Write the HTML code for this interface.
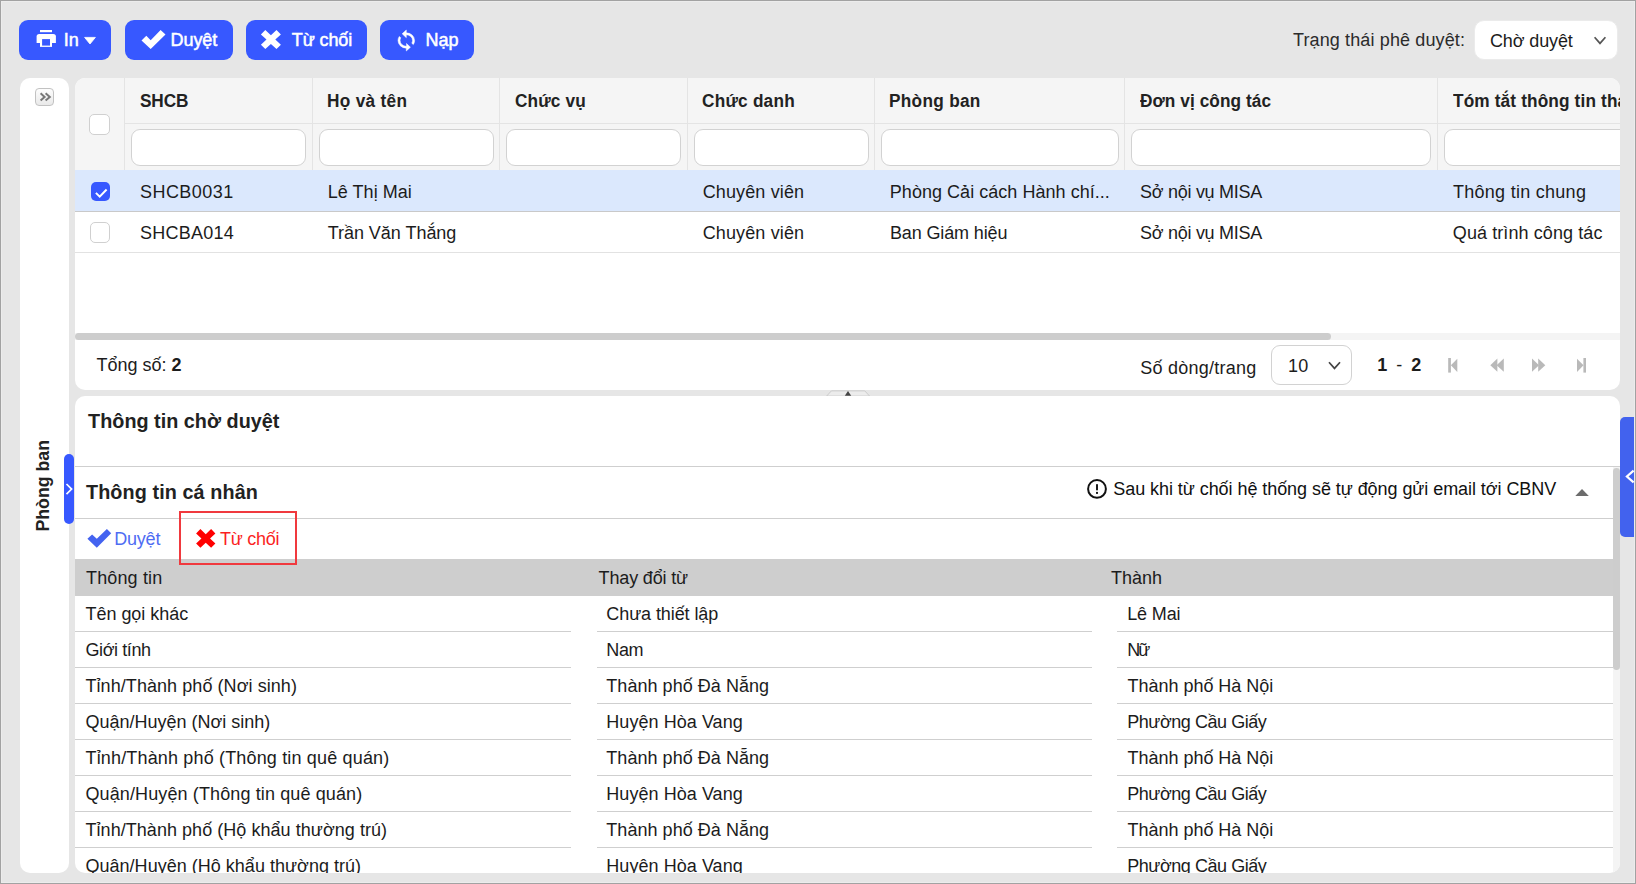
<!DOCTYPE html>
<html><head><meta charset="utf-8">
<style>
*{box-sizing:border-box;margin:0;padding:0}
html,body{width:1636px;height:884px;overflow:hidden}
body{background:#e6e6e6;font-family:"Liberation Sans",sans-serif;color:#1c1c1c;position:relative;font-size:18px}
.a{position:absolute}
svg{position:absolute;overflow:visible}
.t{position:absolute;white-space:nowrap;line-height:1}
.btn{position:absolute;top:20px;height:40px;background:#3758ff;border-radius:9px}
.w{color:#fff;-webkit-text-stroke:0.45px #fff}
.panel{position:absolute;background:#fff;border-radius:10px;overflow:hidden}
.inp{position:absolute;top:129px;height:37px;background:#fff;border:1px solid #d2d2d2;border-radius:9px}
.cb{position:absolute;width:21px;height:21px;border:1px solid #d0d0d0;border-radius:5px;background:#fff}
</style></head><body>
<div class="btn" style="left:19px;width:92px"></div>
<div class="btn" style="left:125px;width:108px"></div>
<div class="btn" style="left:246px;width:121px"></div>
<div class="btn" style="left:380px;width:94px"></div>
<svg class="a" style="left:36px;top:29px" width="21" height="19" viewBox="36 29 21 19"><rect x="40" y="30" width="12" height="2.2" fill="#fff"/><path d="M39.2 34 h14.1 a2.6 2.6 0 0 1 2.6 2.6 v6.4 h-19.3 v-6.4 a2.6 2.6 0 0 1 2.6 -2.6z" fill="#fff"/><rect x="40" y="38.9" width="12" height="8" fill="#fff"/><rect x="42.1" y="39.1" width="7.9" height="6.5" fill="#3758ff"/></svg>
<div class="t" style="left:63.8px;top:30.76px;font-size:18px;color:#fff;-webkit-text-stroke:0.5px #fff;">In</div>
<svg class="a" style="left:84px;top:37px" width="12" height="8" viewBox="84 37 12 8"><path d="M84.6 37.4 h10.8 l-5.4 6.6z" fill="#fff" stroke="#fff" stroke-width="0.8" stroke-linejoin="round"/></svg>
<svg class="a" style="left:141px;top:29px" width="25" height="21" viewBox="141 29 25 21"><polygon points="141.5,40.4 146.3,35.75 150.7,40.15 160.6,30 165.5,34.4 150.7,49.05" fill="#fff"/></svg>
<div class="t" style="left:170.6px;top:30.76px;font-size:18px;color:#fff;letter-spacing:-0.1px;-webkit-text-stroke:0.5px #fff;">Duyệt</div>
<svg class="a" style="left:260px;top:29px" width="22" height="21" viewBox="260 29 22 21"><polygon points="260.90,34.40 265.30,30.00 270.90,35.15 276.50,30.00 280.90,34.40 275.30,39.55 280.90,44.70 276.50,49.10 270.90,43.95 265.30,49.10 260.90,44.70 266.50,39.55" fill="#fff"/></svg>
<div class="t" style="left:291.8px;top:30.76px;font-size:18px;color:#fff;letter-spacing:-0.1px;-webkit-text-stroke:0.5px #fff;">Từ chối</div>
<svg class="a" style="left:398.3px;top:30px" width="16.6" height="21" viewBox="4 1 16 22" preserveAspectRatio="none"><path fill="#fff" stroke="#fff" stroke-width="0.5" d="M12,18A6,6 0 0,1 6,12C6,11 6.25,10.03 6.7,9.2L5.24,7.74C4.46,8.97 4,10.43 4,12A8,8 0 0,0 12,20V23L16,19L12,15M12,4V1L8,5L12,9V6A6,6 0 0,1 18,12C18,13 17.75,13.97 17.3,14.8L18.76,16.26C19.54,15.03 20,13.57 20,12A8,8 0 0,0 12,4Z"/></svg>
<div class="t" style="left:425.6px;top:30.76px;font-size:18px;color:#fff;-webkit-text-stroke:0.5px #fff;">Nạp</div>
<div class="t" style="left:1293px;top:31.06px;font-size:18px;color:#2b2b2b;letter-spacing:0.125px;">Trạng thái phê duyệt:</div>
<div class="a" style="left:1474px;top:20px;width:144px;height:40px;background:#fff;border-radius:10px;border:1px solid #ebebeb;"></div>
<div class="t" style="left:1490px;top:32.06px;font-size:18px;letter-spacing:-0.125px;">Chờ duyệt</div>
<svg class="a" style="left:1593px;top:35px" width="14" height="11" viewBox="1593 35 14 11"><path d="M1594.6 37.2 L1600 43.4 L1605.4 37.2" fill="none" stroke="#555" stroke-width="1.7"/></svg>
<div class="panel" style="left:20px;top:78px;width:49px;height:795px"></div>
<div class="a" style="left:35px;top:88px;width:19px;height:18px;background:linear-gradient(#fdfdfd,#e9e9e9);border:1px solid #c2c2c2;border-radius:4px;"></div>
<svg class="a" style="left:39px;top:92px" width="12" height="10" viewBox="39 92 12 10"><path d="M40.6 93.3 L44.6 96.9 L40.6 100.5 M45.6 93.3 L49.8 96.9 L45.6 100.5" fill="none" stroke="#777" stroke-width="2"/></svg>
<div class="t" style="left:0;top:0;font-size:18px;font-weight:700;color:#222;transform-origin:0 0;transform:translate(34px,531.6px) rotate(-90deg) scaleX(0.985)">Phòng ban</div>
<div class="a" style="left:64px;top:454px;width:10px;height:70px;background:#3758ff;border-radius:5px;"></div>
<svg class="a" style="left:65px;top:482px" width="9" height="14" viewBox="65 482 9 14"><path d="M66.5 484 L71.6 489.1 L66.5 494.2" fill="none" stroke="#fff" stroke-width="1.7"/></svg>
<div class="panel" style="left:75px;top:78px;width:1545px;height:312px">
<div class="a" style="left:0;top:0;width:1545px;height:92px;background:#f5f5f5"></div>
</div>
<div class="a" style="left:75px;top:78px;width:1545px;height:312px;overflow:hidden;border-radius:10px">
<div class="a" style="left:-75px;top:-78px;width:1636px;height:884px">
<div class="a" style="left:124.0px;top:78px;width:1px;height:92px;background:#e4e4e4;"></div>
<div class="a" style="left:311.5px;top:78px;width:1px;height:92px;background:#e4e4e4;"></div>
<div class="a" style="left:499.0px;top:78px;width:1px;height:92px;background:#e4e4e4;"></div>
<div class="a" style="left:686.5px;top:78px;width:1px;height:92px;background:#e4e4e4;"></div>
<div class="a" style="left:874.0px;top:78px;width:1px;height:92px;background:#e4e4e4;"></div>
<div class="a" style="left:1124.0px;top:78px;width:1px;height:92px;background:#e4e4e4;"></div>
<div class="a" style="left:1437.0px;top:78px;width:1px;height:92px;background:#e4e4e4;"></div>
<div class="a" style="left:125px;top:123px;width:1500px;height:1px;background:#e4e4e4;"></div>
<div class="t" style="left:139.8px;top:91.76px;font-size:18px;font-weight:700;color:#222;letter-spacing:-0.133px;transform:scaleX(0.957);transform-origin:0 0;">SHCB</div>
<div class="t" style="left:327.3px;top:91.76px;font-size:18px;font-weight:700;color:#222;letter-spacing:0.312px;transform:scaleX(0.957);transform-origin:0 0;">Họ và tên</div>
<div class="t" style="left:514.6px;top:91.76px;font-size:18px;font-weight:700;color:#222;letter-spacing:0.133px;transform:scaleX(0.957);transform-origin:0 0;">Chức vụ</div>
<div class="t" style="left:702.3px;top:91.76px;font-size:18px;font-weight:700;color:#222;letter-spacing:0.225px;transform:scaleX(0.957);transform-origin:0 0;">Chức danh</div>
<div class="t" style="left:889.4px;top:91.76px;font-size:18px;font-weight:700;color:#222;letter-spacing:0.312px;transform:scaleX(0.957);transform-origin:0 0;">Phòng ban</div>
<div class="t" style="left:1139.9px;top:91.76px;font-size:18px;font-weight:700;color:#222;letter-spacing:0.079px;transform:scaleX(0.957);transform-origin:0 0;">Đơn vị công tác</div>
<div class="t" style="left:1453px;top:91.76px;font-size:18px;font-weight:700;color:#222;letter-spacing:0.15px;transform:scaleX(0.957);transform-origin:0 0;">Tóm tắt thông tin thay đổi</div>
<div class="inp" style="left:131px;width:175px"></div>
<div class="inp" style="left:319px;width:174.5px"></div>
<div class="inp" style="left:506px;width:175px"></div>
<div class="inp" style="left:694px;width:174.5px"></div>
<div class="inp" style="left:881px;width:237.5px"></div>
<div class="inp" style="left:1131px;width:300px"></div>
<div class="inp" style="left:1444px;width:256px"></div>
<div class="cb" style="left:89px;top:114px"></div>
<div class="a" style="left:75px;top:170px;width:1545px;height:41px;background:#dbe8fd;"></div>
<div class="a" style="left:75px;top:211px;width:1545px;height:1px;background:#c9c9c9;"></div>
<div class="a" style="left:75px;top:252px;width:1545px;height:1px;background:#e2e2e2;"></div>
<div class="a" style="left:91px;top:182px;width:18.5px;height:19px;background:#3758ff;border-radius:5px;"></div>
<svg class="a" style="left:94px;top:187px" width="14" height="12" viewBox="94 187 14 12"><path d="M95.9 192.9 L99.7 196.6 L106.6 189.5" fill="none" stroke="#fff" stroke-width="2"/></svg>
<div class="cb" style="left:90px;top:222px;width:20px;height:20.5px"></div>
<div class="t" style="left:140.0px;top:182.76px;font-size:18px;letter-spacing:0.457px;">SHCB0031</div>
<div class="t" style="left:327.8px;top:182.76px;font-size:18px;letter-spacing:0.033px;">Lê Thị Mai</div>
<div class="t" style="left:702.7px;top:182.76px;font-size:18px;letter-spacing:0.13px;">Chuyên viên</div>
<div class="t" style="left:889.8px;top:182.76px;font-size:18px;letter-spacing:0.036px;">Phòng Cải cách Hành chí...</div>
<div class="t" style="left:1140.0px;top:182.76px;font-size:18px;letter-spacing:-0.276px;">Sở nội vụ MISA</div>
<div class="t" style="left:1453.0px;top:182.76px;font-size:18px;letter-spacing:0.271px;">Thông tin chung</div>
<div class="t" style="left:140.0px;top:223.76px;font-size:18px;letter-spacing:0.229px;">SHCBA014</div>
<div class="t" style="left:327.7px;top:223.76px;font-size:18px;letter-spacing:-0.032px;">Trần Văn Thắng</div>
<div class="t" style="left:702.7px;top:223.76px;font-size:18px;letter-spacing:0.13px;">Chuyên viên</div>
<div class="t" style="left:889.9px;top:223.76px;font-size:18px;letter-spacing:-0.125px;">Ban Giám hiệu</div>
<div class="t" style="left:1140.0px;top:223.76px;font-size:18px;letter-spacing:-0.276px;">Sở nội vụ MISA</div>
<div class="t" style="left:1452.8px;top:223.76px;font-size:18px;letter-spacing:0.088px;">Quá trình công tác</div>
<div class="a" style="left:75px;top:333px;width:1545px;height:7px;background:#f4f4f4;"></div>
<div class="a" style="left:75px;top:333px;width:1256px;height:7px;background:#cdcdcd;border-radius:4px;"></div>
<div class="t" style="left:96.5px;top:355.76px;font-size:18px;">Tổng số: <b>2</b></div>
<div class="t" style="left:1140.2px;top:358.56px;font-size:18px;letter-spacing:0.258px;">Số dòng/trang</div>
<div class="a" style="left:1271px;top:345px;width:81px;height:40px;background:#fff;border:1px solid #d2d2d2;border-radius:9px;"></div>
<div class="t" style="left:1288px;top:356.76px;font-size:18px;letter-spacing:0.3px;">10</div>
<svg class="a" style="left:1327px;top:360px" width="15" height="11" viewBox="1327 360 15 11"><path d="M1329 362.2 L1334.5 368.4 L1340 362.2" fill="none" stroke="#444" stroke-width="1.7"/></svg>
<div class="t" style="left:1377.3px;top:355.76px;font-size:18px;letter-spacing:0.4px;word-spacing:3.1px;"><b>1</b> - <b>2</b></div>
<svg class="a" style="left:1447px;top:357px" width="140" height="17" viewBox="1447 357 140 17"><g fill="#b9b9b9"><rect x="1448.2" y="358" width="2.7" height="14.6"/><polygon points="1450.9,365.3 1457.3,358.8 1457.3,372"/><polygon points="1490.3,365.2 1497.4,358.6 1497.4,371.8"/><polygon points="1496.6,365.2 1503.8,358.6 1503.8,371.8"/><polygon points="1545.3,365.2 1538.2,358.6 1538.2,371.8"/><polygon points="1539,365.2 1532,358.6 1532,371.8"/><rect x="1583.4" y="358" width="2.6" height="14.6"/><polygon points="1583.5,365.3 1577,358.8 1577,372"/></g></svg>
</div></div>
<svg class="a" style="left:826px;top:389.5px" width="45" height="7" viewBox="826 389.5 45 7"><polygon points="826.6,395.6 831.4,390.4 864.8,390.4 869.6,395.6" fill="#ececec" stroke="#c8c8c8" stroke-width="0.9"/><polygon points="844.8,395.2 848,390.6 851.2,395.2" fill="#444"/></svg>
<div class="a" style="left:75px;top:396px;width:1545px;height:477px;overflow:hidden;border-radius:10px;background:#fff">
<div class="a" style="left:-75px;top:-396px;width:1636px;height:884px">
<div class="t" style="left:88.1px;top:412.04px;font-size:19.8px;font-weight:700;color:#222;letter-spacing:0.018px;">Thông tin chờ duyệt</div>
<div class="a" style="left:75px;top:466px;width:1545px;height:1px;background:#cfcfcf;"></div>
<div class="t" style="left:86px;top:482.64px;font-size:19.8px;font-weight:700;color:#222;letter-spacing:0.094px;">Thông tin cá nhân</div>
<div class="a" style="left:75px;top:518px;width:1538px;height:1px;background:#cfcfcf;"></div>
<svg class="a" style="left:1086px;top:478px" width="22" height="22" viewBox="1086 478 22 22"><circle cx="1097" cy="488.9" r="8.9" fill="none" stroke="#111" stroke-width="2"/><rect x="1096.05" y="484.2" width="1.9" height="6.1" fill="#111"/><rect x="1096.05" y="491.9" width="1.9" height="2" fill="#111"/></svg>
<div class="t" style="left:1113.3px;top:479.56px;font-size:18px;color:#111;letter-spacing:-0.061px;">Sau khi từ chối hệ thống sẽ tự động gửi email tới CBNV</div>
<svg class="a" style="left:1575px;top:488px" width="14" height="8" viewBox="1575 488 14 8"><polygon points="1575.3,495.9 1582,489 1588.8,495.9" fill="#6c6c6c"/></svg>
<svg class="a" style="left:87px;top:528px" width="25" height="21" viewBox="87 528 25 21"><polygon points="87.4,538.8 92.1,534.5 96.8,538.8 106.9,529.1 111.2,533.2 96.8,547.8" fill="#4463f0"/></svg>
<div class="t" style="left:114.2px;top:530.26px;font-size:18px;color:#4e6cf3;letter-spacing:-0.2px;">Duyệt</div>
<svg class="a" style="left:195px;top:528px" width="22" height="21" viewBox="195 528 22 21"><polygon points="196.10,533.40 200.40,529.10 205.75,534.15 211.10,529.10 215.40,533.40 210.05,538.45 215.40,543.50 211.10,547.80 205.75,542.75 200.40,547.80 196.10,543.50 201.45,538.45" fill="#ff0000"/></svg>
<div class="t" style="left:219.9px;top:530.26px;font-size:18px;color:#fb1f24;letter-spacing:-0.251px;">Từ chối</div>
<div class="a" style="left:75px;top:559px;width:1538px;height:36.6px;background:#cecece;"></div>
<div class="t" style="left:86.1px;top:569.36px;font-size:18px;letter-spacing:0.125px;">Thông tin</div>
<div class="t" style="left:598.6px;top:569.36px;font-size:18px;letter-spacing:-0.16px;">Thay đổi từ</div>
<div class="t" style="left:1111px;top:569.36px;font-size:18px;">Thành</div>
<div class="t" style="left:85.5px;top:604.56px;font-size:18px;letter-spacing:-0.031px;">Tên gọi khác</div>
<div class="t" style="left:606.3px;top:604.56px;font-size:18px;letter-spacing:-0.085px;">Chưa thiết lập</div>
<div class="t" style="left:1127.2px;top:604.56px;font-size:18px;letter-spacing:-0.14px;">Lê Mai</div>
<div class="a" style="left:75px;top:631px;width:496px;height:1px;background:#cfcfcf;"></div>
<div class="a" style="left:596.5px;top:631px;width:495.5px;height:1px;background:#cfcfcf;"></div>
<div class="a" style="left:1117px;top:631px;width:496px;height:1px;background:#cfcfcf;"></div>
<div class="t" style="left:85.5px;top:640.56px;font-size:18px;letter-spacing:-0.415px;">Giới tính</div>
<div class="t" style="left:606.3px;top:640.56px;font-size:18px;letter-spacing:-0.35px;">Nam</div>
<div class="t" style="left:1127.2px;top:640.56px;font-size:18px;letter-spacing:-1.9px;">Nữ</div>
<div class="a" style="left:75px;top:667px;width:496px;height:1px;background:#cfcfcf;"></div>
<div class="a" style="left:596.5px;top:667px;width:495.5px;height:1px;background:#cfcfcf;"></div>
<div class="a" style="left:1117px;top:667px;width:496px;height:1px;background:#cfcfcf;"></div>
<div class="t" style="left:85.5px;top:676.56px;font-size:18px;letter-spacing:0.063px;">Tỉnh/Thành phố (Nơi sinh)</div>
<div class="t" style="left:606.3px;top:676.56px;font-size:18px;letter-spacing:0.044px;">Thành phố Đà Nẵng</div>
<div class="t" style="left:1127.5px;top:676.56px;font-size:18px;letter-spacing:-0.021px;">Thành phố Hà Nội</div>
<div class="a" style="left:75px;top:703px;width:496px;height:1px;background:#cfcfcf;"></div>
<div class="a" style="left:596.5px;top:703px;width:495.5px;height:1px;background:#cfcfcf;"></div>
<div class="a" style="left:1117px;top:703px;width:496px;height:1px;background:#cfcfcf;"></div>
<div class="t" style="left:85.5px;top:712.56px;font-size:18px;letter-spacing:-0.01px;">Quận/Huyện (Nơi sinh)</div>
<div class="t" style="left:606.3px;top:712.56px;font-size:18px;letter-spacing:0.053px;">Huyện Hòa Vang</div>
<div class="t" style="left:1127.2px;top:712.56px;font-size:18px;letter-spacing:-0.45px;">Phường Cầu Giấy</div>
<div class="a" style="left:75px;top:739px;width:496px;height:1px;background:#cfcfcf;"></div>
<div class="a" style="left:596.5px;top:739px;width:495.5px;height:1px;background:#cfcfcf;"></div>
<div class="a" style="left:1117px;top:739px;width:496px;height:1px;background:#cfcfcf;"></div>
<div class="t" style="left:85.5px;top:748.56px;font-size:18px;letter-spacing:0.163px;">Tỉnh/Thành phố (Thông tin quê quán)</div>
<div class="t" style="left:606.3px;top:748.56px;font-size:18px;letter-spacing:0.044px;">Thành phố Đà Nẵng</div>
<div class="t" style="left:1127.5px;top:748.56px;font-size:18px;letter-spacing:-0.021px;">Thành phố Hà Nội</div>
<div class="a" style="left:75px;top:775px;width:496px;height:1px;background:#cfcfcf;"></div>
<div class="a" style="left:596.5px;top:775px;width:495.5px;height:1px;background:#cfcfcf;"></div>
<div class="a" style="left:1117px;top:775px;width:496px;height:1px;background:#cfcfcf;"></div>
<div class="t" style="left:85.5px;top:784.56px;font-size:18px;letter-spacing:0.117px;">Quận/Huyện (Thông tin quê quán)</div>
<div class="t" style="left:606.3px;top:784.56px;font-size:18px;letter-spacing:0.053px;">Huyện Hòa Vang</div>
<div class="t" style="left:1127.2px;top:784.56px;font-size:18px;letter-spacing:-0.45px;">Phường Cầu Giấy</div>
<div class="a" style="left:75px;top:811px;width:496px;height:1px;background:#cfcfcf;"></div>
<div class="a" style="left:596.5px;top:811px;width:495.5px;height:1px;background:#cfcfcf;"></div>
<div class="a" style="left:1117px;top:811px;width:496px;height:1px;background:#cfcfcf;"></div>
<div class="t" style="left:85.5px;top:820.56px;font-size:18px;letter-spacing:0.045px;">Tỉnh/Thành phố (Hộ khẩu thường trú)</div>
<div class="t" style="left:606.3px;top:820.56px;font-size:18px;letter-spacing:0.044px;">Thành phố Đà Nẵng</div>
<div class="t" style="left:1127.5px;top:820.56px;font-size:18px;letter-spacing:-0.021px;">Thành phố Hà Nội</div>
<div class="a" style="left:75px;top:847px;width:496px;height:1px;background:#cfcfcf;"></div>
<div class="a" style="left:596.5px;top:847px;width:495.5px;height:1px;background:#cfcfcf;"></div>
<div class="a" style="left:1117px;top:847px;width:496px;height:1px;background:#cfcfcf;"></div>
<div class="t" style="left:85.5px;top:856.56px;font-size:18px;letter-spacing:0.017px;">Quận/Huyện (Hộ khẩu thường trú)</div>
<div class="t" style="left:606.3px;top:856.56px;font-size:18px;letter-spacing:0.053px;">Huyện Hòa Vang</div>
<div class="t" style="left:1127.2px;top:856.56px;font-size:18px;letter-spacing:-0.45px;">Phường Cầu Giấy</div>
<div class="a" style="left:75px;top:883px;width:496px;height:1px;background:#cfcfcf;"></div>
<div class="a" style="left:596.5px;top:883px;width:495.5px;height:1px;background:#cfcfcf;"></div>
<div class="a" style="left:1117px;top:883px;width:496px;height:1px;background:#cfcfcf;"></div>
<div class="a" style="left:179.3px;top:511px;width:117.7px;height:54px;background:transparent;border:2px solid #f0393e;"></div>
<div class="a" style="left:1613px;top:467px;width:7px;height:410px;background:#f4f4f4;"></div>
<div class="a" style="left:1613px;top:467.5px;width:6.8px;height:202.3px;background:#cdcdcd;border-radius:3.4px;"></div>
</div></div>
<div class="a" style="left:1620px;top:417px;width:16px;height:120px;background:#4262ee;border-radius:5px 0 0 5px;"></div>
<svg class="a" style="left:1624px;top:469px" width="11" height="16" viewBox="1624 469 11 16"><path d="M1633.6 470.6 L1626.9 476.5 L1633.6 482.4" fill="none" stroke="#fff" stroke-width="2.2"/></svg>
<div class="a" style="left:0;top:0;width:1636px;height:884px;border:1px solid #a2a2a2;box-shadow:inset 0 0 0 1px #ececec;z-index:50"></div>
</body></html>
